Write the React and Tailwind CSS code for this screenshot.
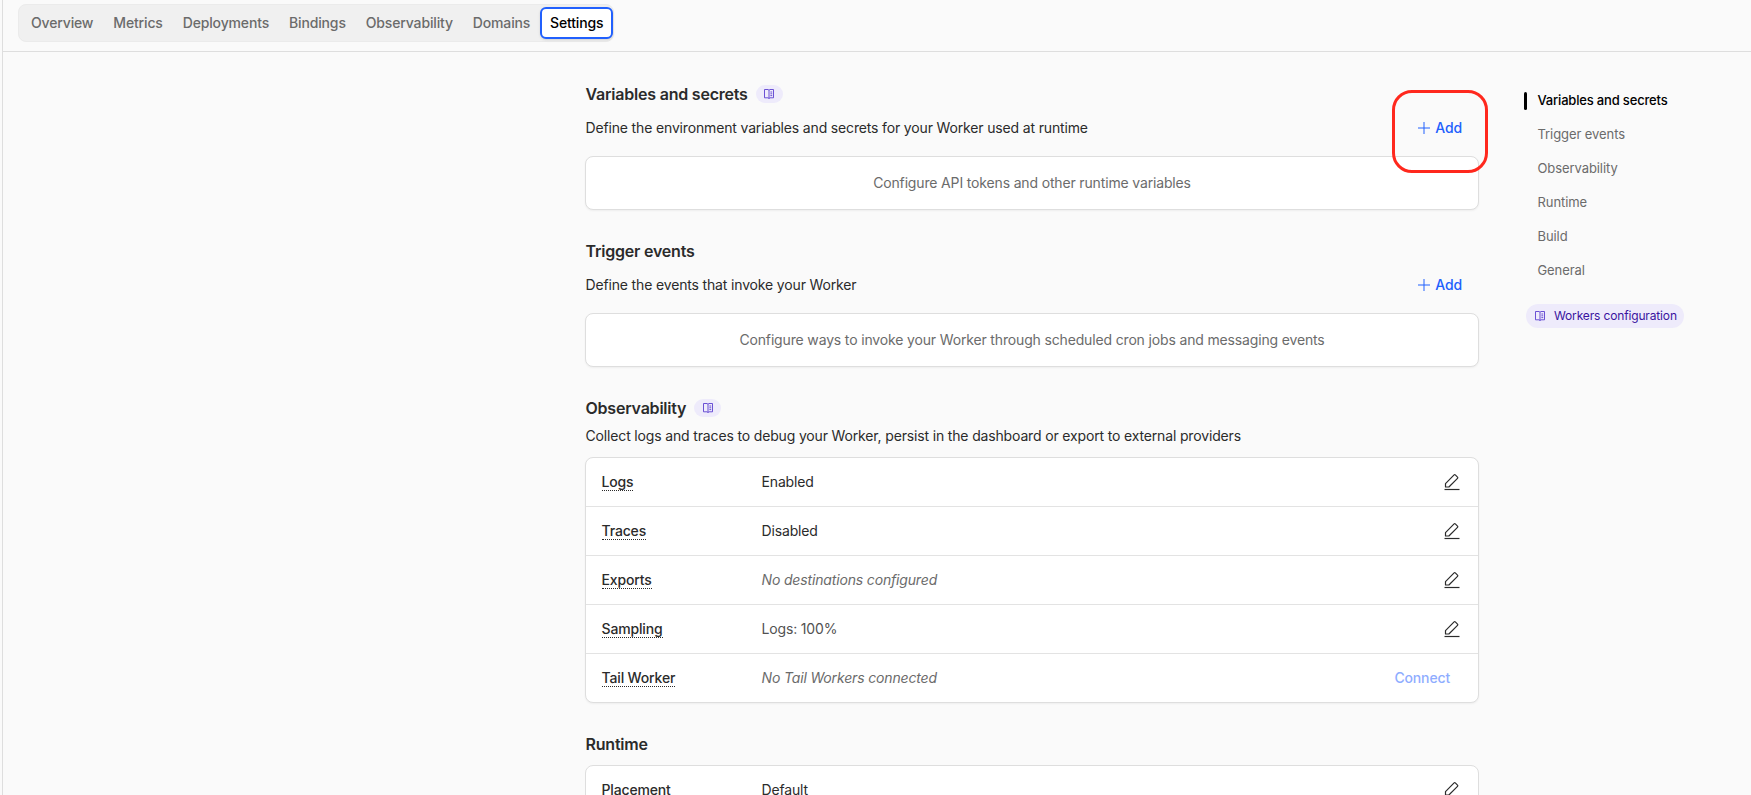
import React from 'react';

function BookIcon({ className }) {
  return (
    <svg className={className} viewBox="0 0 12 12" fill="none" stroke="currentColor" strokeWidth="0.9">
      <path d="M1.5 1.5H5L6 2.2L7 1.5H10.5V9.8H7L6 10.5L5 9.8H1.5ZM6 2.2V10.5M7.4 4H9.2M7.4 5.8H9.2M7.4 7.6H9.2" />
    </svg>
  );
}

function PlusIcon() {
  return (
    <svg className="size-3" viewBox="0 0 12 12" stroke="currentColor" strokeWidth="1">
      <path d="M6 0V12M0 6H12" />
    </svg>
  );
}

function PencilIcon() {
  return (
    <svg className="h-[18px] w-4 text-[#2b2b2b]" viewBox="0 0 16 18" fill="none" stroke="currentColor" strokeWidth="1.2" strokeLinejoin="round">
      <path d="M1.5 14V10.6L10.1 1.9Q10.7 1.3 11.3 1.9L13.5 4.1Q14.1 4.7 13.5 5.3L4.9 14Z" />
      <path d="M0.5 16.5H15.5" />
    </svg>
  );
}

function DocsPill() {
  return (
    <span className="flex h-[18px] w-[27px] items-center justify-center rounded-full bg-[#eeebfb] text-[#5b3fd0]">
      <BookIcon className="size-3 shrink-0" />
    </span>
  );
}

function Heading({ children, docs }) {
  return (
    <h2 className="flex h-6 items-center gap-2 pl-[0.5px] text-base font-semibold tracking-[-0.21px] text-[#2b2b2b]">
      {children}
      {docs && <DocsPill />}
    </h2>
  );
}

function EmptySection({ title, docs, description, empty, highlight }) {
  return (
    <section className="h-[157px]">
      <Heading docs={docs}>{title}</Heading>
      <div className="mt-1 flex h-9 items-center justify-between pr-[17px] pl-[0.5px]">
        <p className="text-[#2b2b2b]">{description}</p>
        <button className="relative flex items-center gap-[5px] font-medium text-[#2160fd]">
          <PlusIcon />
          Add
          {highlight && (
            <span className="absolute -top-[28px] -left-[26px] h-[83px] w-24 rounded-[20px] border-3 border-[#ff281d]" />
          )}
        </button>
      </div>
      <div className="mt-2.5 flex h-[54px] items-center justify-center rounded-lg border border-[#dedede] bg-white text-[#6b6b6b] shadow-xs">
        {empty}
      </div>
    </section>
  );
}

function Row({ label, value, tone, action }) {
  return (
    <div className="flex h-[49px] items-center border-b border-[#e3e3e3] pr-[18px] pl-[15.5px] last:h-12 last:border-b-0">
      <div className="w-40">
        <span className="border-b border-dotted border-[#2b2b2b] font-medium text-[#2b2b2b]">{label}</span>
      </div>
      <div className={tone}>{value}</div>
      <div className="ml-auto flex items-center">
        {action ? (
          <span className="mr-2.5 font-medium text-[#8fadff]">{action}</span>
        ) : (
          <PencilIcon />
        )}
      </div>
    </div>
  );
}

const tabs = ['Overview', 'Metrics', 'Deployments', 'Bindings', 'Observability', 'Domains'];
const links = ['Trigger events', 'Observability', 'Runtime', 'Build', 'General'];

export default function App() {
  return (
    <div className="flex h-[795px] overflow-hidden bg-[#fafafa] pl-[2px] font-['Inter',sans-serif] text-sm tracking-[-0.155px]">
      <div className="flex-1 border-l border-[#dedede]">
        <header className="h-[52px] border-b border-[#dedede] pt-1 pl-[15px]">
          <nav className="flex h-[38px] w-[596px] items-center rounded-lg border border-[#ebebeb] bg-[#f0f0f0] pl-0.5 font-medium text-[#6b6b6b]">
            {tabs.map((t) => (
              <a key={t} className="px-2.5">{t}</a>
            ))}
            <a className="flex h-8 w-[73px] shrink-0 items-center justify-center rounded-md border-2 border-[#2160fd] bg-white text-black shadow-sm">Settings</a>
          </nav>
        </header>
        <div className="flex pt-[30px] pl-[582px]">
          <main className="w-[894px]">
            <EmptySection
              title="Variables and secrets"
              docs
              highlight
              description="Define the environment variables and secrets for your Worker used at runtime"
              empty="Configure API tokens and other runtime variables"
            />
            <EmptySection
              title="Trigger events"
              description="Define the events that invoke your Worker"
              empty="Configure ways to invoke your Worker through scheduled cron jobs and messaging events"
            />
            <section>
              <Heading docs>Observability</Heading>
              <p className="mt-1.5 h-5 pl-[0.5px] leading-5 text-[#2b2b2b]">
                Collect logs and traces to debug your Worker, persist in the dashboard or export to external providers
              </p>
              <div className="mt-[11px] rounded-lg border border-[#dedede] bg-white shadow-xs">
                <Row label="Logs" value="Enabled" tone="text-[#2b2b2b]" />
                <Row label="Traces" value="Disabled" tone="text-[#2b2b2b]" />
                <Row label="Exports" value="No destinations configured" tone="italic text-[#6b6b6b]" />
                <Row label="Sampling" value="Logs: 100%" tone="text-[#525252]" />
                <Row label="Tail Worker" value="No Tail Workers connected" tone="italic text-[#6b6b6b]" action="Connect" />
              </div>
            </section>
            <section className="mt-[29px]">
              <Heading>Runtime</Heading>
              <div className="mt-[9px] rounded-lg border border-[#dedede] bg-white">
                <Row label="Placement" value="Default" tone="text-[#2b2b2b]" />
              </div>
            </section>
          </main>
          <aside className="ml-[45px] pt-[10px] text-[13px] whitespace-nowrap">
            <div className="flex h-[18px] font-medium leading-4 tracking-[-0.18px] text-black">
              <span className="mr-[10.5px] h-[18px] w-[3px] rounded-sm bg-black" />
              Variables and secrets
            </div>
            {links.map((l) => (
              <div key={l} className="mt-4 h-[18px] pl-[13.5px] leading-4 tracking-[-0.08px] text-[#6b6b6b]">{l}</div>
            ))}
            <span className="mt-[24px] ml-0.5 flex h-6 w-[158px] items-center gap-2 rounded-full bg-[#eeebfb] pl-2 text-xs tracking-[-0.15px] text-[#3a14a0]">
              <BookIcon className="size-3 shrink-0 text-[#5b3fd0]" />
              Workers configuration
            </span>
          </aside>
        </div>
      </div>
    </div>
  );
}
